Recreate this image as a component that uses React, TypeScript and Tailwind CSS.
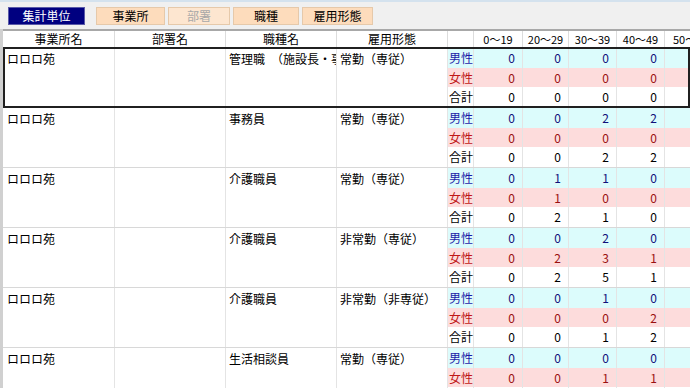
import React from "react";

type Group = {
  office: string;
  dept: string;
  job: string;
  employ: string;
  male: number[];
  female: number[];
  total: number[];
  selected?: boolean;
};

const groups: Group[] = [
  { office: "ロロロ苑", dept: "", job: "管理職　（施設長・事務長）", employ: "常勤（専従）", male: [0, 0, 0, 0], female: [0, 0, 0, 0], total: [0, 0, 0, 0], selected: true },
  { office: "ロロロ苑", dept: "", job: "事務員", employ: "常勤（専従）", male: [0, 0, 2, 2], female: [0, 0, 0, 0], total: [0, 0, 2, 2] },
  { office: "ロロロ苑", dept: "", job: "介護職員", employ: "常勤（専従）", male: [0, 1, 1, 0], female: [0, 1, 0, 0], total: [0, 2, 1, 0] },
  { office: "ロロロ苑", dept: "", job: "介護職員", employ: "非常勤（専従）", male: [0, 0, 2, 0], female: [0, 2, 3, 1], total: [0, 2, 5, 1] },
  { office: "ロロロ苑", dept: "", job: "介護職員", employ: "非常勤（非専従）", male: [0, 0, 1, 0], female: [0, 0, 0, 2], total: [0, 0, 1, 2] },
  { office: "ロロロ苑", dept: "", job: "生活相談員", employ: "常勤（専従）", male: [0, 0, 0, 0], female: [0, 0, 1, 1], total: [0, 0, 1, 1] },
];

const ages = ["0～19", "20～29", "30～39", "40～49", "50～"];

const grid = "grid grid-cols-[112px_111px_111px_111px_26px_49px_46px_48px_48px_1fr]";
const font = { fontFamily: '"Noto Sans CJK JP", "MS UI Gothic", sans-serif' };

function TabButton({ label, active, disabled, width }: { label: string; active?: boolean; disabled?: boolean; width: string }) {
  if (active) {
    return (
      <div className={`${width} h-[18px] flex items-center justify-center bg-[#000080] text-white border border-[#5a5aa8] text-[12px] leading-none`}>
        {label}
      </div>
    );
  }
  return (
    <div
      className={`${width} h-[18px] flex items-center justify-center border border-[#e6c9aa] text-[12px] leading-none ${
        disabled ? "bg-[#fde6d0] text-[#a8a8a8]" : "bg-[#fddcbc] text-black"
      }`}
    >
      {label}
    </div>
  );
}

function SubRow({ label, values, kind }: { label: string; values: number[]; kind: "m" | "f" | "t" }) {
  const bg = kind === "m" ? "bg-[#dcfcfc]" : kind === "f" ? "bg-[#fddcdc]" : "bg-white";
  const labelColor = kind === "m" ? "text-[#1c1ca8]" : kind === "f" ? "text-[#c01818]" : "text-black";
  const numColor = kind === "m" ? "text-[#10107a]" : kind === "f" ? "text-[#9a1010]" : "text-black";
  return (
    <>
      <div className={`${bg} ${labelColor} border-r border-[#e4e4e4] flex items-center pl-[1px] text-[12px] leading-none`}>{label}</div>
      {values.map((v, i) => (
        <div key={i} className={`${bg} ${numColor} border-r border-[#e4e4e4] flex items-center justify-end pr-[7px] text-[12px] leading-none`}>
          {v}
        </div>
      ))}
      <div className={`${bg}`} />
    </>
  );
}

function GroupRows({ g }: { g: Group }) {
  return (
    <div className={`relative ${grid} grid-rows-[20px_19px_20px] border-b border-[#d8d8d8] bg-white`}>
      <div className="row-span-3 border-r border-[#e4e4e4] pl-[4px] pt-[4px] text-[12px] leading-[14px] overflow-hidden whitespace-nowrap">{g.office}</div>
      <div className="row-span-3 border-r border-[#e4e4e4] pl-[3px] pt-[4px] text-[12px] leading-[14px] overflow-hidden whitespace-nowrap">{g.dept}</div>
      <div className="row-span-3 border-r border-[#e4e4e4] pl-[3px] pt-[4px] text-[12px] leading-[14px] overflow-hidden whitespace-nowrap">{g.job}</div>
      <div className="row-span-3 border-r border-[#e4e4e4] pl-[3px] pt-[4px] text-[12px] leading-[14px] overflow-hidden whitespace-nowrap">{g.employ}</div>
      <div className="col-span-6 row-span-3 grid grid-cols-subgrid grid-rows-subgrid">
        <SubRow label="男性" values={g.male} kind="m" />
        <SubRow label="女性" values={g.female} kind="f" />
        <SubRow label="合計" values={g.total} kind="t" />
      </div>
      {g.selected && <div className="pointer-events-none absolute inset-x-0 top-[-1px] bottom-[-1px] border-2 border-[#202020]" />}
    </div>
  );
}

export default function App() {
  return (
    <div className="w-[690px] h-[388px] overflow-hidden bg-[#f0f0f0] text-black" style={font}>
      {/* Tabs */}
      <div className="h-[29px] border-t-2 border-[#d4e2ee] flex items-start pt-[5px] pl-[8px] gap-[3px]">
        <TabButton label="集計単位" active width="w-[77px]" />
        <div className="w-[5px]" />
        <TabButton label="事業所" width="w-[69px]" />
        <TabButton label="部署" disabled width="w-[62px]" />
        <TabButton label="職種" width="w-[66px]" />
        <TabButton label="雇用形態" width="w-[71px]" />
      </div>

      {/* Table */}
      <div className="border-l-[3px] border-[#d0d0d0] bg-white h-full">
        <div className={`${grid} h-[19px] border-t-2 border-[#a8a8a8] border-b border-b-[#909090] bg-white`}>
          {["事業所名", "部署名", "職種名", "雇用形態", ""].map((h, i) => (
            <div key={i} className="border-r border-[#dcdcdc] flex items-center justify-center text-[12px] leading-none whitespace-nowrap">
              {h}
            </div>
          ))}
          {ages.map((a, i) => (
            <div
              key={a}
              className={`flex items-center whitespace-nowrap overflow-hidden text-[11px] leading-none ${
                i === 4 ? "pl-[8px]" : "justify-center border-r border-[#dcdcdc]"
              }`}
            >
              {a}
            </div>
          ))}
        </div>
        {groups.map((g, i) => (
          <GroupRows key={i} g={g} />
        ))}
      </div>
    </div>
  );
}
